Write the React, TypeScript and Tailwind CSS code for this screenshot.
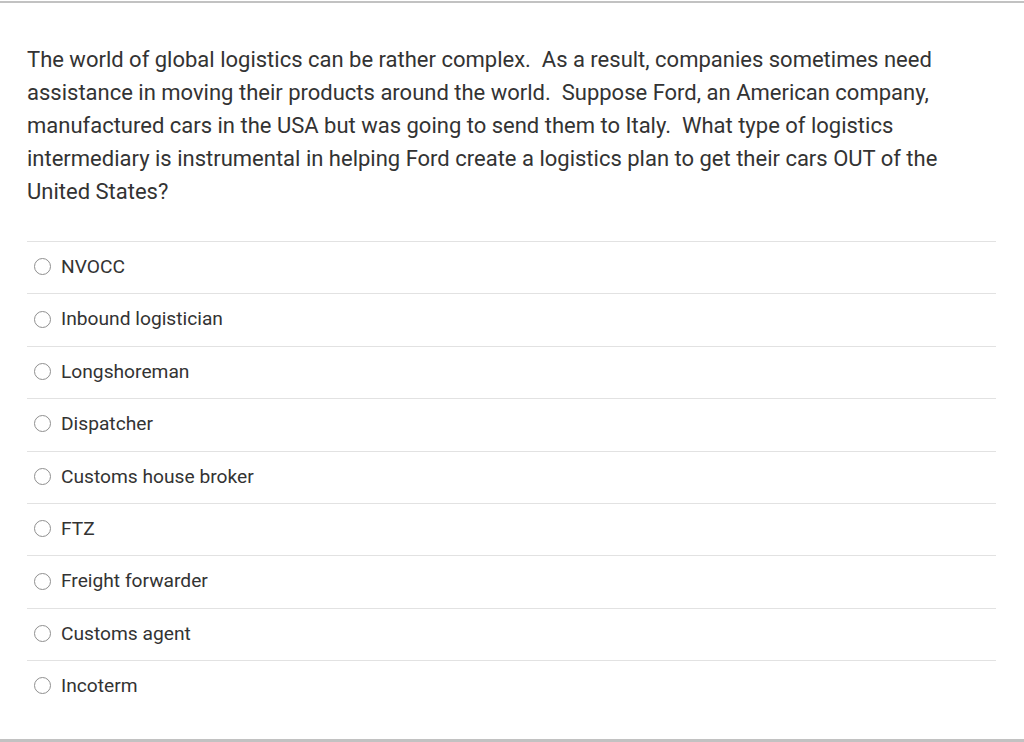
import React from 'react';

const options = [
    "NVOCC",
    "Inbound logistician",
    "Longshoreman",
    "Dispatcher",
    "Customs house broker",
    "FTZ",
    "Freight forwarder",
    "Customs agent",
    "Incoterm",
];

export default function App() {
    return (
        <div className="h-[742px] bg-white pt-px font-['Roboto',sans-serif] text-[#333333]">
            <div className="flex h-[741px] flex-col border-t-2 border-b-[3px] border-[#c2c2c2]">
                <div className="pl-[27px] pr-[28px] pt-[40px]">
                    <p className="text-[22px] leading-[33px]">
                        The world of global logistics can be rather complex.&nbsp; As a result, companies sometimes need assistance in moving their products around the world.&nbsp; Suppose Ford, an American company, manufactured cars in the USA but was going to send them to Italy.&nbsp; What type of logistics intermediary is instrumental in helping Ford create a logistics plan to get their cars OUT of the United States?
                    </p>
                    <ul className="mt-[33px]">
                        {options.map((opt) => (
                            <li
                                key={opt}
                                className="flex h-[52.4px] items-center gap-[10px] border-t-[1.5px] border-[#e2e2e2] pb-[2px] pl-[7px]"
                            >
                                <span className="h-[17px] w-[17px] shrink-0 rounded-full border border-[#8f8f8f] bg-white" />
                                <span className="text-[19.2px] leading-none">{opt}</span>
                            </li>
                        ))}
                    </ul>
                </div>
            </div>
        </div>
    );
}
